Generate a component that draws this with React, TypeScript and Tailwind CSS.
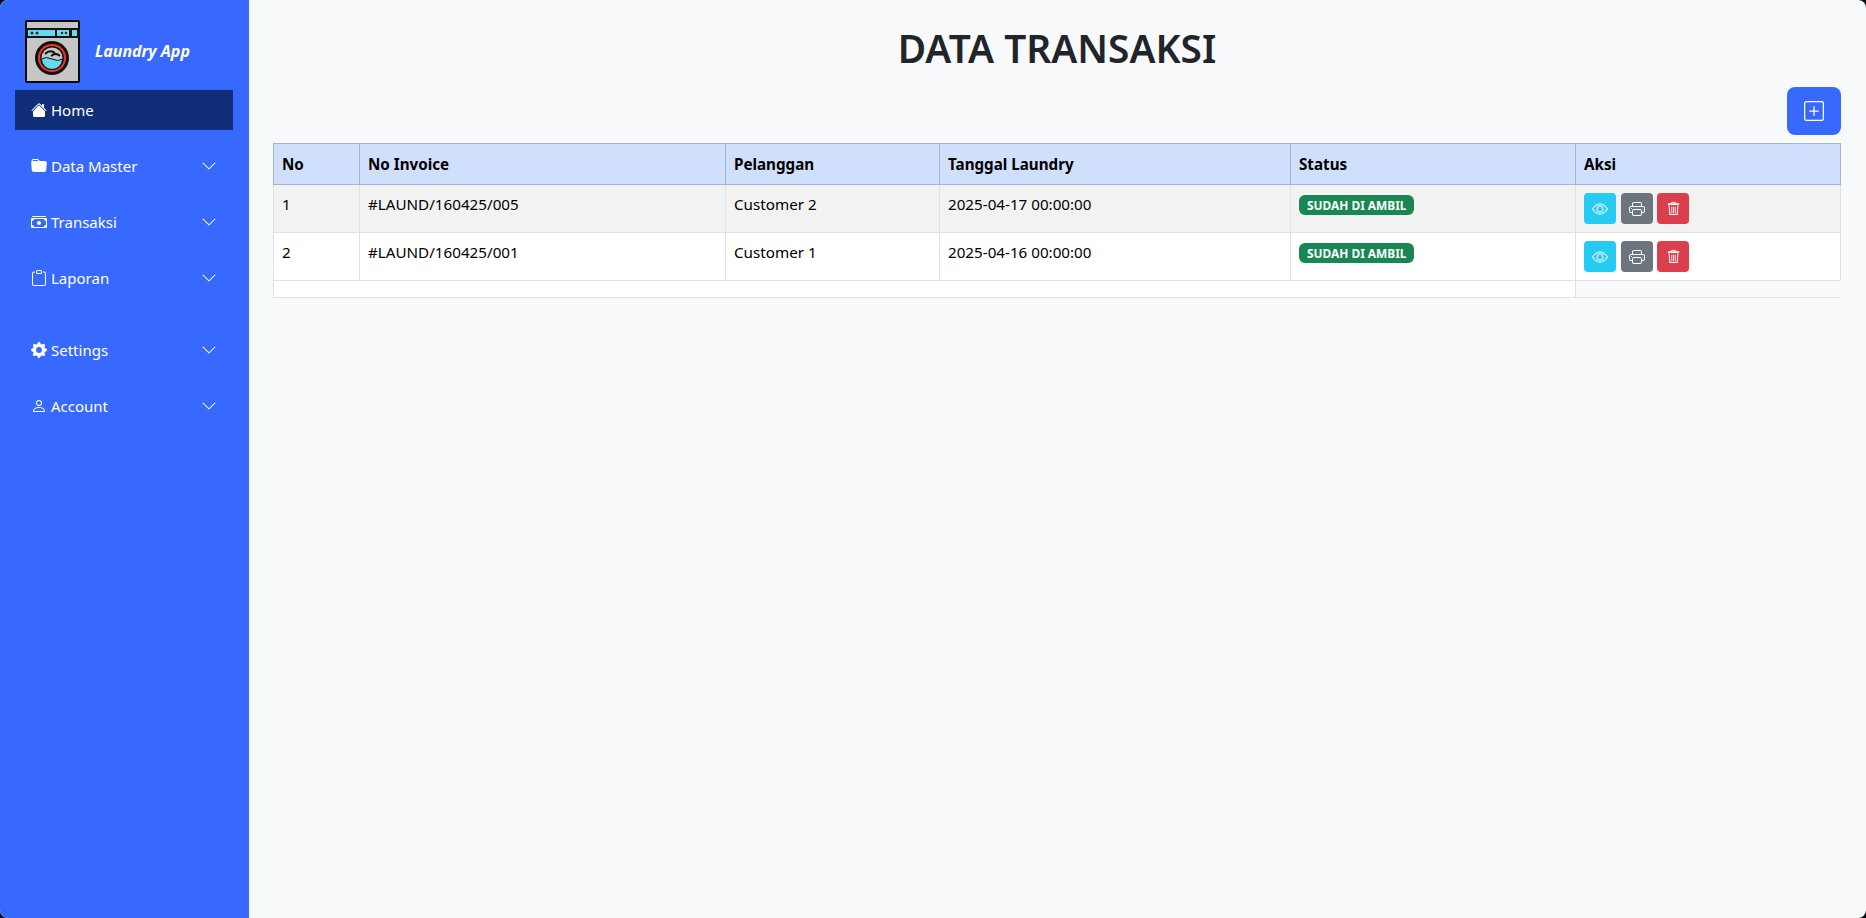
import { BsCashStack, BsChevronDown, BsClipboard, BsEye, BsFolderFill, BsGearFill, BsHouseFill, BsPerson, BsPlusSquare, BsPrinter } from 'react-icons/bs';
import type { ReactNode } from 'react';

type MenuItem = {
  label: string;
  icon: ReactNode;
  className: string;
};

const menuItems: MenuItem[] = [
  { label: 'Data Master', icon: <BsFolderFill />, className: 'mt-[8px]' },
  { label: 'Transaksi', icon: <BsCashStack />, className: 'mt-0' },
  { label: 'Laporan', icon: <BsClipboard />, className: 'mt-0' },
  { label: 'Settings', icon: <BsGearFill />, className: 'mt-[16px]' },
  { label: 'Account', icon: <BsPerson />, className: 'mt-0' },
];

const rows = [
  { no: 1, invoice: '#LAUND/160425/005', customer: 'Customer 2', date: '2025-04-17 00:00:00', striped: true },
  { no: 2, invoice: '#LAUND/160425/001', customer: 'Customer 1', date: '2025-04-16 00:00:00', striped: false },
];

const headers = ['No', 'No Invoice', 'Pelanggan', 'Tanggal Laundry', 'Status', 'Aksi'];

function WasherLogo() {
  return (
    <svg width="56" height="64" viewBox="0 0 56 64" className="shrink-0">
      <rect x="1" y="1" width="53" height="61" rx="1" fill="#c6c6c6" stroke="#0b0b0b" strokeWidth="2" />
      <rect x="1" y="8" width="53" height="10" fill="#111" />
      <rect x="3" y="10" width="27" height="6" fill="#63dcef" />
      <rect x="32" y="10" width="12" height="6" fill="#63dcef" />
      <rect x="47" y="10" width="5" height="6" fill="#63dcef" />
      <circle cx="7" cy="13" r="1.5" fill="#222" />
      <circle cx="12" cy="13" r="1.5" fill="#222" />
      <circle cx="37" cy="13" r="1.2" fill="#222" />
      <circle cx="41" cy="13" r="1.2" fill="#222" />
      <circle cx="27" cy="38" r="17" fill="#111" />
      <circle cx="27" cy="38" r="14" fill="#ee3524" />
      <circle cx="27" cy="38" r="12" fill="#111" />
      <circle cx="27" cy="38" r="10.5" fill="#c6c6c6" />
      <path d="M16.5 39 Q21 36 27 39 T37.5 39 A10.5 10.5 0 0 1 16.5 39 Z" fill="#63dcef" stroke="#111" strokeWidth="1" />
      <path d="M20 34 Q25 29 30 33 M26 36 Q31 32 35 36" fill="none" stroke="#111" strokeWidth="2" />
    </svg>
  );
}

function TrashIcon() {
  return (
    <svg width="13" height="15" viewBox="0 0 15 16" fill="none" stroke="currentColor">
      <path d="M5 2.5V1h5v1.5" strokeWidth="1" />
      <path d="M1 3h13" strokeWidth="2" />
      <path d="M2.5 4.5l.7 10.5h8.6l.7-10.5" strokeWidth="1.2" />
      <path d="M5.5 6v7.5M7.5 6v7.5M9.5 6v7.5" strokeWidth="1" />
    </svg>
  );
}

function ActionButton({ color, children, className }: { color: string; children: ReactNode; className: string }) {
  return (
    <button type="button" className={`flex h-[31px] w-[32px] items-center justify-center rounded-[4px] text-[16px] text-white ${color} ${className}`}>
      {children}
    </button>
  );
}

export default function App() {
  return (
    <div className="h-[918px] w-[1866px] overflow-hidden bg-[#0b0f1a] font-['Noto_Sans','Open_Sans',sans-serif]">
      <div className="flex h-full overflow-hidden rounded-[8px] bg-[#f8f9fa]">
        <aside className="flex w-[249px] shrink-0 flex-col bg-[#3869ff] text-white">
          <div className="flex h-[90px] items-end pb-[6px] pl-[25px]">
            <WasherLogo />
            <span className="mb-[21px] ml-[14px] text-[16px] font-bold italic">Laundry App</span>
          </div>
          <a className="mx-[15px] mr-[16px] flex h-[40px] items-center gap-[4px] bg-[#112f79] pl-[16px] text-[15px]">
            <BsHouseFill className="text-[16px]" />
            Home
          </a>
          {menuItems.map((item) => (
            <div key={item.label} className={`flex h-[56px] items-center pl-[31px] pr-[32px] text-[15px] ${item.className}`}>
              <span className="w-[20px] text-[16px]">{item.icon}</span>
              <span>{item.label}</span>
              <BsChevronDown className="ml-auto text-[16px]" />
            </div>
          ))}
        </aside>

        <main className="min-w-0 flex-1 pl-[24px] pr-[25px]">
          <h1 className="mt-[22px] text-center text-[38.8px] leading-[53px] font-semibold text-[#212529]">DATA TRANSAKSI</h1>
          <div className="mt-[12px] flex justify-end">
            <button type="button" className="flex h-[48px] w-[54px] items-center justify-center rounded-[8px] bg-[#3869ff] text-[20px] text-white">
              <BsPlusSquare />
            </button>
          </div>
          <table className="mt-[8px] w-[1567px] table-fixed border-collapse text-[15.2px] text-black">
            <colgroup>
              <col className="w-[86px]" />
              <col className="w-[366px]" />
              <col className="w-[214px]" />
              <col className="w-[351px]" />
              <col className="w-[285px]" />
              <col className="w-[265px]" />
            </colgroup>
            <thead>
              <tr className="h-[41px] bg-[#cfdffc]">
                {headers.map((header) => (
                  <th key={header} className="border border-[#a7b3d1] px-[8px] text-left font-bold">
                    {header}
                  </th>
                ))}
              </tr>
            </thead>
            <tbody>
              {rows.map((row) => (
                <tr key={row.no} className={`h-[48px] ${row.striped ? 'bg-[#f2f2f2]' : 'bg-white'}`}>
                  <td className="border border-[#dee2e6] px-[8px] pb-[8px]">{row.no}</td>
                  <td className="border border-[#dee2e6] px-[8px] pb-[8px]">{row.invoice}</td>
                  <td className="border border-[#dee2e6] px-[8px] pb-[8px]">{row.customer}</td>
                  <td className="border border-[#dee2e6] px-[8px] pb-[8px]">{row.date}</td>
                  <td className="border border-[#dee2e6] px-[8px] pb-[9px]">
                    <span className="inline-block rounded-[6px] bg-[#198754] px-[8px] py-[3px] text-[11.9px] leading-[14px] font-bold text-white">SUDAH DI AMBIL</span>
                  </td>
                  <td className="border border-[#dee2e6] px-[8px]">
                    <div className="flex">
                      <ActionButton color="bg-[#25cbf0]" className=""><BsEye /></ActionButton>
                      <ActionButton color="bg-[#6c757d]" className="ml-[5px]"><BsPrinter /></ActionButton>
                      <ActionButton color="bg-[#dc3f4c]" className="ml-[4px]"><TrashIcon /></ActionButton>
                    </div>
                  </td>
                </tr>
              ))}
              <tr className="h-[17px]">
                <td colSpan={5} className="border border-[#dee2e6] bg-white" />
                <td className="border-y border-l border-[#dee2e6] bg-[#f8f9fa]" />
              </tr>
            </tbody>
          </table>
        </main>
      </div>
    </div>
  );
}
